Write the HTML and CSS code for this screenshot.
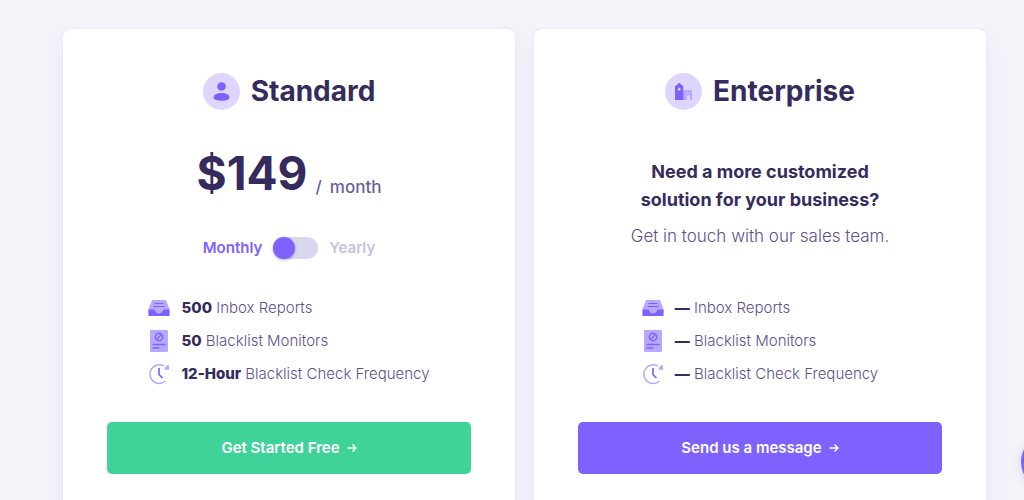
FILE: index.html
```html
<!DOCTYPE html>
<html lang="en">
<head>
    <meta charset="UTF-8">
    <meta name="viewport" content="width=device-width, initial-scale=1.0">
    <title>Pricing</title>
    <link rel="stylesheet" href="styles.css">
</head>
<body>

    <!-- Icons shared by both plans -->
    <svg class="sprite" aria-hidden="true">
        <symbol id="icon-inbox" viewBox="0 0 22 18">
            <path d="M4 1h14l3.500 9v7H.5v-7z" fill="#b9a8ff"/>
            <path d="M6.500 4.500h9M5.500 7.500h11" stroke="#7f61ff" stroke-width="1.200"/>
            <path d="M.5 10.500H6c.6 0 .8.400 1 1 .5 1.800 2 3 4 3s3.500-1.200 4-3c.2-.6.400-1 1-1h5.500V16c0 .6-.4 1-1 1h-19c-.6 0-1-.4-1-1z" fill="#7f61ff"/>
        </symbol>
        <symbol id="icon-report" viewBox="0 0 22 24">
            <rect x="2" y="1" width="18" height="22" rx="1" fill="#b9a8ff"/>
            <g fill="none" stroke="#7f61ff" stroke-width="1.400">
                <circle cx="11" cy="8" r="3.700"/>
                <path d="M8.500 10.500l5-5M4.500 15.500h13M4.500 19h7"/>
            </g>
        </symbol>
        <symbol id="icon-clock" viewBox="0 0 22 22">
            <path d="M16 3.200A9.300 9.300 0 1 0 17.500 18" fill="none" stroke="#b9a8ff" stroke-width="1.500"/>
            <path d="M16 6.500L19 2l2 .5v4.500z" fill="#b9a8ff"/>
            <path d="M11 5v6.500l3.500 3.500" fill="none" stroke="#7f61ff" stroke-width="1.700"/>
        </symbol>
        <symbol id="icon-arrow" viewBox="0 0 10 10">
            <path d="M.5 5H9M5.500 1.500L9 5 5.500 8.500" fill="none" stroke="#fff" stroke-width="1.500"/>
        </symbol>
    </svg>

    <main class="plans">

        <section class="plan">
            <h2 class="plan-title">
                <svg class="plan-icon" viewBox="0 0 37 37" aria-hidden="true">
                    <circle cx="18.500" cy="18.500" r="18.500" fill="#ded6ff"/>
                    <circle cx="18.500" cy="13.500" r="4.300" fill="#7f61ff"/>
                    <path d="M10.500 24.500c0-3 3.500-4.500 8-4.500s8 1.500 8 4.500c0 2.500-3.500 3.200-8 3.200s-8-.7-8-3.200z" fill="#7f61ff"/>
                </svg>
                Standard
            </h2>
            <div class="plan-offer">
                <p class="price"><span class="amount">$149</span><span class="period">/</span><span class="period">month</span></p>
                <div class="billing">
                    <label class="billing-on" for="billing">Monthly</label>
                    <input class="switch" type="checkbox" role="switch" id="billing">
                    <label class="billing-off" for="billing">Yearly</label>
                </div>
            </div>
            <ul class="features">
                <li><svg class="icon-inbox"><use href="#icon-inbox"/></svg><span><b>500</b> Inbox Reports</span></li>
                <li><svg class="icon-report"><use href="#icon-report"/></svg><span><b>50</b> Blacklist Monitors</span></li>
                <li><svg class="icon-clock"><use href="#icon-clock"/></svg><span><b>12-Hour</b> Blacklist Check Frequency</span></li>
            </ul>
            <button class="btn btn-green" type="button">Get Started Free <svg class="arrow"><use href="#icon-arrow"/></svg></button>
        </section>

        <section class="plan">
            <h2 class="plan-title">
                <svg class="plan-icon" viewBox="0 0 37 37" aria-hidden="true">
                    <circle cx="18.500" cy="18.500" r="18.500" fill="#ded6ff"/>
                    <path d="M18 17h9v10h-2v-3.500a1.500 1.500 0 0 0-3 0V27h-4z" fill="#b9a8ff"/>
                    <path fill-rule="evenodd" d="M10 27V13l2.500-1.500 1-1.500h1.500l1 1.500 2.300 1.500V27zM14.200 14.800a1.400 1.400 0 1 0 0 2.800 1.400 1.400 0 0 0 0-2.800z" fill="#7f61ff"/>
                </svg>
                Enterprise
            </h2>
            <div class="plan-offer plan-offer-custom">
                <h3>Need a more customized<br>solution for your business?</h3>
                <p>Get in touch with our sales team.</p>
            </div>
            <ul class="features">
                <li><svg class="icon-inbox"><use href="#icon-inbox"/></svg><span><b>—</b> Inbox Reports</span></li>
                <li><svg class="icon-report"><use href="#icon-report"/></svg><span><b>—</b> Blacklist Monitors</span></li>
                <li><svg class="icon-clock"><use href="#icon-clock"/></svg><span><b>—</b> Blacklist Check Frequency</span></li>
            </ul>
            <button class="btn btn-purple" type="button">Send us a message <svg class="arrow"><use href="#icon-arrow"/></svg></button>
        </section>

    </main>

    <button class="chat" type="button" aria-label="Open chat"></button>

</body>
</html>
```
FILE: styles.css
```css
* {
    box-sizing: border-box;
}

body {
    margin: 0;
    font-family: Inter, "Liberation Sans", sans-serif;
    color: #352b5d;
    background: #f3f4fa;
    overflow-x: hidden;
}

h2, h3, p, ul {
    margin: 0;
    padding: 0;
}

.sprite {
    display: none;
}

/* Plan cards */
.plans {
    display: grid;
    grid-template-columns: 1fr 1fr;
    gap: 19px;
    padding: 29px 38px 29px 63px;
}

.plan {
    display: flex;
    flex-direction: column;
    padding: 44px;
    background: #fff;
    border-radius: 8px;
    box-shadow: 0 0 2px rgba(90, 75, 190, 0.12), 0 12px 20px rgba(90, 75, 190, 0.08);
}

.plan-title {
    display: flex;
    justify-content: center;
    align-items: center;
    gap: 11px;
    font-size: 28px;
    font-weight: 700;
    line-height: 37px;
}

.plan-icon {
    width: 37px;
    height: 37px;
}

.plan-offer {
    min-height: 181px;
    padding-top: 34px;
    text-align: center;
}

/* Price and billing switch */
.price {
    display: flex;
    justify-content: center;
    align-items: flex-end;
    gap: 8px;
}

.amount {
    font-size: 46px;
    font-weight: 700;
    line-height: 58px;
}

.period {
    font-size: 17px;
    font-weight: 500;
    line-height: 30px;
    color: #6a5f9b;
}

.billing {
    display: flex;
    justify-content: center;
    align-items: center;
    gap: 11px;
    margin-top: 35px;
    font-size: 15px;
    font-weight: 600;
    line-height: 22px;
}

.billing-on {
    color: #7f61ff;
}

.billing-off {
    color: #c6c1e2;
}

.switch {
    appearance: none;
    display: flex;
    width: 45px;
    height: 22px;
    margin: 0;
    border-radius: 11px;
    background: #d9d7ec;
    cursor: pointer;
}

.switch::before {
    content: "";
    width: 22px;
    height: 22px;
    border-radius: 50%;
    background: #7f61ff;
    box-shadow: 0 1px 3px rgba(53, 43, 93, 0.4);
}

.switch:checked {
    justify-content: flex-end;
}

/* Enterprise text */
.plan-offer-custom {
    padding-top: 48px;
}

.plan-offer-custom h3 {
    font-size: 18px;
    font-weight: 700;
    line-height: 28px;
}

.plan-offer-custom p {
    margin-top: 8px;
    font-size: 17px;
    font-weight: 300;
    line-height: 28px;
    color: #5d5191;
}

/* Feature list */
.features {
    align-self: center;
    list-style: none;
    font-size: 15px;
    font-weight: 300;
    line-height: 33px;
    color: #5d5191;
}

.features li {
    display: flex;
    align-items: center;
    gap: 11px;
}

.features b {
    font-weight: 800;
    color: #352b5d;
}

.icon-inbox {
    width: 22px;
    height: 18px;
}

.icon-report {
    width: 22px;
    height: 24px;
}

.icon-clock {
    width: 22px;
    height: 22px;
}

/* Buttons */
.btn {
    display: flex;
    justify-content: center;
    align-items: center;
    gap: 7px;
    margin-top: 32px;
    padding: 0;
    border: 0;
    border-radius: 5px;
    font-family: inherit;
    font-size: 15px;
    font-weight: 600;
    line-height: 52px;
    color: #fff;
    cursor: pointer;
}

.btn-green {
    background: #3fd39a;
}

.btn-purple {
    background: #7f61ff;
}

.arrow {
    width: 10px;
    height: 10px;
}

.chat {
    position: fixed;
    right: -53px;
    bottom: 10px;
    width: 56px;
    height: 56px;
    border: 0;
    border-radius: 50%;
    background: #7f61ff;
    box-shadow: 0 2px 10px rgba(53, 43, 93, 0.15);
}
```
